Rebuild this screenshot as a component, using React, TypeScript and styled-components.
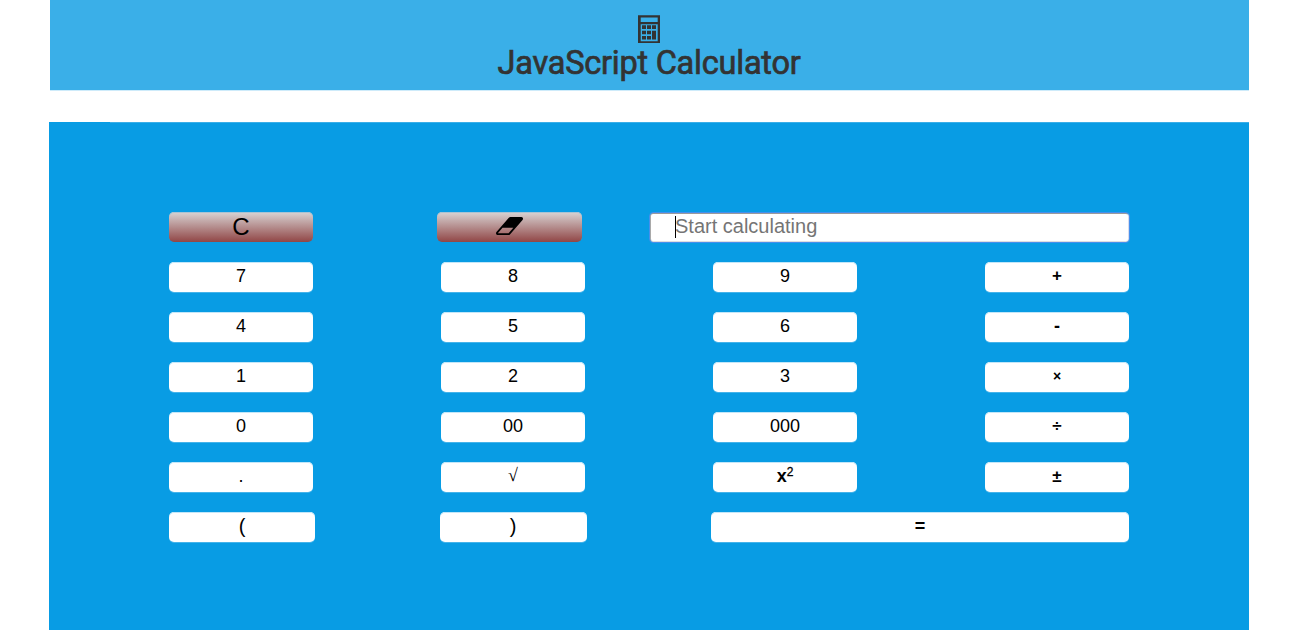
import React from 'react';
import styled, { createGlobalStyle } from 'styled-components';

const GlobalStyle = createGlobalStyle`
  * { box-sizing: border-box; }
  html, body { margin: 0; background: #fff; overflow: hidden; }
`;

const Page = styled.div`
  width: 1200px;
  margin-left: 49px;
  font-family: 'Liberation Sans', Arial, sans-serif;
`;

const Header = styled.header`
  height: 91px;
  margin: 0 0 31px 1px;
  padding: 15px 2px 0 0;
  display: flex;
  flex-direction: column;
  align-items: center;
  background: #3aafe8;
  border-bottom: 1px solid #ceebfa;
`;

const Title = styled.h1`
  margin: 0;
  padding-left: 1px;
  font: 400 32.5px/40px Roboto, sans-serif;
  letter-spacing: -0.23px;
  -webkit-text-stroke: 0.7px #333;
  color: #333;
  white-space: nowrap;
`;

const Calculator = styled.main`
  height: 508px;
  padding: 90px 120px 0;
  display: flex;
  flex-direction: column;
  gap: 20px;
  background: linear-gradient(#3aaee8, #3aaee8) 61px 0 / 1139px 1px no-repeat #089ce4;
`;

const Row = styled.div<{ $columns?: string }>`
  display: grid;
  grid-template-columns: ${p => p.$columns ?? 'repeat(4, 144px)'};
  justify-content: space-between;
  height: 30px;
`;

const Key = styled.button<{ $size?: number; $bold?: boolean; $shift?: number; $column?: number; $serif?: boolean }>`
  grid-column: ${p => p.$column ?? 'auto'};
  height: 30px;
  border: 0;
  border-radius: 5px;
  padding: 0 0 ${p => p.$shift ?? 2}px;
  display: flex;
  align-items: center;
  justify-content: center;
  background: #fff;
  box-shadow: inset 0 1px #c2e6f8, 0 1px #45b3ea;
  color: #000;
  font-family: ${p => (p.$serif ? "'Liberation Serif', serif" : "'Liberation Sans', Arial, sans-serif")};
  font-size: ${p => p.$size ?? 18}px;
  font-weight: ${p => (p.$bold ? 700 : 400)};
  line-height: 28px;
`;

const ClearKey = styled(Key)`
  background: linear-gradient(#d8d4d4, #914646);
  box-shadow: inset 0 1px #a9c3d3;
`;

const Power = styled.span`
  font-size: 12px;
  font-weight: 400;
  -webkit-text-stroke: 0.3px #000;
  line-height: 1;
  padding-bottom: 8px;
`;

const Display = styled.input`
  width: 100%;
  height: 29px;
  margin-top: 1px;
  border: 1px solid;
  border-color: #9a9a9a #d8dcec #dedede #a9a9a9;
  border-radius: 3px;
  outline: 1px solid #4490ee;
  padding: 0 0 2px 24px;
  background: #fff;
  font: 20px 'Liberation Sans', Arial, sans-serif;
  color: #000;
  &::placeholder { color: #757575; opacity: 1; }
`;

const Field = styled.div`
  grid-column: 5;
  height: 30px;
  position: relative;
  &::after {
    content: '';
    position: absolute;
    left: 25px;
    top: 4px;
    width: 1px;
    height: 22px;
    background: #000;
  }
`;

const CalculatorIcon = () => (
  <svg width="22" height="28" viewBox="0 0 22 28" fill="#333">
    <path fillRule="evenodd" d="M0 .2h22V28H0zM2.7 2.6v4.4h17V2.6zM2.7 9.2v17h17v-17z" />
    <path d="M4 10.2h4v3.9H4zM9 10.2h4v3.9H9zM14 10.2h4v3.9h-4zM4 15.7h4v3.5H4zM9 15.7h4v3.5H9zM4 20.9h4v3.6H4zM9 20.9h4v3.6H9zM14 15.7h4v8.8h-4z" />
  </svg>
);

const EraserIcon = () => (
  <svg width="27" height="18" viewBox="0 256 1920 1280" fill="#000">
    <path d="M896 1408l336-384h-768l-336 384h768zM1909 331q15 34 9.5 71.5t-30.5 65.5l-896 1024q-38 44-96 44h-768q-38 0-69.5-20.5t-47.5-54.5q-15-34-9.5-71.5t30.5-65.5l896-1024q38-44 96-44h768q38 0 69.5 20.5t47.5 54.5z" />
  </svg>
);

type KeySpec = { label: string; power?: string; size?: number; bold?: boolean; shift?: number; serif?: boolean };

const rows: KeySpec[][] = [
  [{ label: '7' }, { label: '8' }, { label: '9' }, { label: '+', bold: true, size: 17 }],
  [{ label: '4' }, { label: '5' }, { label: '6' }, { label: '-', bold: true }],
  [{ label: '1' }, { label: '2' }, { label: '3' }, { label: '×', bold: true, size: 14 }],
  [{ label: '0' }, { label: '00' }, { label: '000' }, { label: '÷', bold: true, size: 17 }],
  [{ label: '.' }, { label: '√', serif: true, shift: 4 }, { label: 'x', power: '2', bold: true, shift: 2 }, { label: '±', bold: true, size: 17, shift: 1 }],
];

export default function App() {
  return (
    <>
      <GlobalStyle />
      <Page>
        <Header>
          <CalculatorIcon />
          <Title>JavaScript Calculator</Title>
        </Header>
        <Calculator>
          <Row $columns="144px 124px 145px 68px 479px">
            <ClearKey $size={24} $column={1} $shift={0}>C</ClearKey>
            <ClearKey $column={3} $shift={2}><EraserIcon /></ClearKey>
            <Field><Display placeholder="Start calculating" /></Field>
          </Row>
          {rows.map((keys, i) => (
            <Row key={i}>
              {keys.map(k => (
                <Key key={k.label} $size={k.size} $bold={k.bold} $shift={k.shift} $serif={k.serif}>
                  {k.label}{k.power && <Power>{k.power}</Power>}
                </Key>
              ))}
            </Row>
          ))}
          <Row $columns="146px 147px 418px">
            <Key $size={20} $shift={2}>(</Key>
            <Key $size={20} $shift={2}>)</Key>
            <Key $bold>=</Key>
          </Row>
        </Calculator>
      </Page>
    </>
  );
}
